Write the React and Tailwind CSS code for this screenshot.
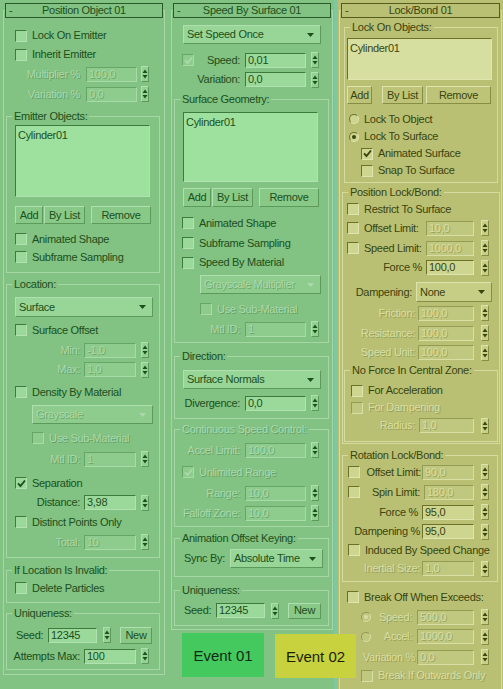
import React from "react";

const G = {
  bg: "bg-[#82c282]",
  text: "text-[#1c4f1c]",
  dis: "text-[#acd8ac] [text-shadow:1px_1px_0_rgba(60,120,60,0.45)]",
  disIcon: "text-[#acd8ac]",
  list: "bg-[#9ee09e]",
  field: "bg-[#9bd99b]",
  fieldDis: "bg-[#8dcc8d]",
  dd: "bg-[#97d697]",
  sunk: "border-t-[#3d7b3d] border-l-[#3d7b3d] border-b-[#b2e2b2] border-r-[#b2e2b2]",
  sunkDis: "border-t-[#67a567] border-l-[#67a567] border-b-[#a9dba9] border-r-[#a9dba9]",
  raised: "border-t-[#b0e0b0] border-l-[#b0e0b0] border-b-[#5c9a5c] border-r-[#5c9a5c]",
  btn: "bg-[#88c988]",
  spinBg: "bg-[#94d294]",
  line: "border-[#a7d7a7]",
  head: "border-[#2a5a2a]",
  dot: "bg-[#1c4f1c]",
  dotDis: "bg-[#acd8ac]",
};

const Y = {
  bg: "bg-[#b9c073]",
  text: "text-[#3a440f]",
  dis: "text-[#d8dea4] [text-shadow:1px_1px_0_rgba(110,118,50,0.45)]",
  disIcon: "text-[#d8dea4]",
  list: "bg-[#d7dfa0]",
  field: "bg-[#cdd58e]",
  fieldDis: "bg-[#c0c77f]",
  dd: "bg-[#c6cd84]",
  sunk: "border-t-[#6b7228] border-l-[#6b7228] border-b-[#e0e5b0] border-r-[#e0e5b0]",
  sunkDis: "border-t-[#949b52] border-l-[#949b52] border-b-[#d8dea4] border-r-[#d8dea4]",
  raised: "border-t-[#dde3ac] border-l-[#dde3ac] border-b-[#868d44] border-r-[#868d44]",
  btn: "bg-[#bdc477]",
  spinBg: "bg-[#c8cf86]",
  line: "border-[#d5db9e]",
  head: "border-[#555c1e]",
  dot: "bg-[#3a440f]",
  dotDis: "bg-[#d8dea4]",
};

const R = ({ cls = "", children }) => (
  <div className={`flex items-center shrink-0 ${cls}`}>{children}</div>
);

function Box({ t, checked, dis, cls = "" }) {
  return (
    <span
      className={`w-[12px] h-[12px] shrink-0 border ${dis ? t.sunkDis : t.sunk} ${
        dis ? t.fieldDis : t.field
      } flex items-center justify-center ${cls}`}
    >
      {checked && (
        <svg width="9" height="9" viewBox="0 0 9 9" className={dis ? t.disIcon : t.text}>
          <path d="M1 4.3 L3.5 7 L8 1.5" fill="none" stroke="currentColor" strokeWidth="1.9" />
        </svg>
      )}
    </span>
  );
}

function Radio({ t, checked, dis, cls = "" }) {
  return (
    <span
      className={`w-[10px] h-[10px] shrink-0 rounded-full border ${dis ? t.sunkDis : t.sunk} ${
        dis ? t.fieldDis : t.field
      } flex items-center justify-center ${cls}`}
    >
      {checked && <span className={`w-[4px] h-[4px] rounded-full ${dis ? t.dotDis : t.dot}`} />}
    </span>
  );
}

function Spin({ t, cls = "" }) {
  return (
    <span
      className={`w-[8px] h-[16px] shrink-0 border ${t.raised} ${t.spinBg} flex items-center justify-center ${cls}`}
    >
      <svg width="6" height="12" viewBox="0 0 6 12" className={t.text}>
        <path d="M0.5 5 L3 1.5 L5.5 5 Z M0.5 7 L3 10.5 L5.5 7 Z" fill="currentColor" />
      </svg>
    </span>
  );
}

function Field({ t, dis, v, cls = "" }) {
  return (
    <span
      className={`h-[15px] shrink-0 border ${dis ? t.sunkDis : t.sunk} ${
        dis ? t.fieldDis : t.field
      } pl-[2px] leading-[13px] overflow-hidden whitespace-nowrap ${dis ? t.dis : t.text} ${cls}`}
    >
      {v}
    </span>
  );
}

function DD({ t, dis, v, cls = "" }) {
  return (
    <div
      className={`flex items-center justify-between border ${t.raised} ${
        dis ? t.fieldDis : t.dd
      } pl-[3px] pr-[6px] shrink-0 ${cls}`}
    >
      <span className={`whitespace-nowrap ${dis ? t.dis : t.text}`}>{v}</span>
      <svg width="7" height="4" viewBox="0 0 7 4" className={dis ? t.disIcon : t.text}>
        <path d="M0 0 H7 L3.5 4 Z" fill="currentColor" />
      </svg>
    </div>
  );
}

function Btn({ t, children, cls = "" }) {
  return (
    <div
      className={`flex items-center justify-center border ${t.raised} ${t.btn} ${t.text} shrink-0 whitespace-nowrap ${cls}`}
    >
      {children}
    </div>
  );
}

function Lbl({ t, dis, cls = "", children }) {
  return <span className={`shrink-0 whitespace-nowrap ${dis ? t.dis : t.text} ${cls}`}>{children}</span>;
}

function CbRow({ t, cls, bcls, label, checked, dis }) {
  return (
    <R cls={cls}>
      <Box t={t} checked={checked} dis={dis} cls={bcls} />
      <Lbl t={t} dis={dis} cls="ml-[5px]">
        {label}
      </Lbl>
    </R>
  );
}

function RadioRow({ t, cls, bcls, label, checked, dis }) {
  return (
    <R cls={cls}>
      <Radio t={t} checked={checked} dis={dis} cls={bcls} />
      <Lbl t={t} dis={dis} cls="ml-[5px]">
        {label}
      </Lbl>
    </R>
  );
}

function NumRow({ t, cls, lcls, label, v, dis, ldis, fcls, scls }) {
  return (
    <R cls={cls}>
      <Lbl t={t} dis={ldis} cls={lcls}>
        {label}
      </Lbl>
      <Field t={t} dis={dis} v={v} cls={fcls} />
      <Spin t={t} cls={scls} />
    </R>
  );
}

function Grp({ t, title, dis, cls = "", children }) {
  return (
    <fieldset className={`border ${t.line} min-w-0 ${cls}`}>
      <legend className={`ml-[5px] px-[2px] leading-[13px] whitespace-nowrap ${dis ? t.dis : t.text}`}>
        {title}
      </legend>
      {children}
    </fieldset>
  );
}

function Col({ t, title, cls = "", children }) {
  return (
    <div className={`shrink-0 pt-[3px] ${cls}`}>
      <div className={`relative z-10 mx-[3px] h-[15px] border ${t.head} ${t.bg} ${t.text} flex items-center`}>
        <span className="w-[10px] pl-[3px]">-</span>
        <span className="flex-1 text-center whitespace-nowrap">{title}</span>
        <span className="w-[10px]" />
      </div>
      <div className={`-mt-[8px] mx-[1px] border ${t.line}`}>{children}</div>
    </div>
  );
}

function Column1() {
  const t = G;
  const g = "ml-[2px] mr-[4px]";
  const nl = "w-[77px] text-right pr-[4px]";
  return (
    <Col t={t} title="Position Object 01" cls="ml-[2px] w-[164px]">
      <CbRow t={t} cls="mt-[15px] h-[19px]" bcls="ml-[11px]" label="Lock On Emitter" />
      <CbRow t={t} cls="h-[19px]" bcls="ml-[11px]" label="Inherit Emitter" />
      <NumRow t={t} cls="h-[20px]" lcls="w-[82px] text-right pr-[6px]" label="Multiplier %" v="100,0" dis ldis fcls="w-[51px]" scls="ml-[4px]" />
      <NumRow t={t} cls="h-[20px]" lcls="w-[82px] text-right pr-[6px]" label="Variation %" v="0,0" dis ldis fcls="w-[51px]" scls="ml-[4px]" />

      <Grp t={t} title="Emitter Objects:" cls={`mt-[6px] ${g} pb-[6px]`}>
        <div className={`mt-[2px] ml-[8px] w-[135px] h-[72px] border ${t.sunk} ${t.list} pl-[2px] pt-[3px] ${t.text}`}>
          Cylinder01
        </div>
        <R cls="mt-[9px] h-[18px]">
          <Btn t={t} cls="ml-[8px] w-[28px] h-[18px]">Add</Btn>
          <Btn t={t} cls="ml-[1px] w-[41px] h-[18px]">By List</Btn>
          <Btn t={t} cls="ml-[6px] w-[60px] h-[18px]">Remove</Btn>
        </R>
        <CbRow t={t} cls="mt-[6px] h-[18px]" bcls="ml-[8px]" label="Animated Shape" />
        <CbRow t={t} cls="h-[18px]" bcls="ml-[8px]" label="Subframe Sampling" />
      </Grp>

      <Grp t={t} title="Location:" cls={`mt-[5px] ${g} pb-[5px]`}>
        <DD t={t} cls="mt-[6px] ml-[8px] w-[138px] h-[20px]" v="Surface" />
        <CbRow t={t} cls="mt-[3px] h-[20px]" bcls="ml-[8px]" label="Surface Offset" />
        <NumRow t={t} cls="h-[20px]" lcls={nl} label="Min:" v="-1,0" dis ldis fcls="w-[52px]" scls="ml-[5px]" />
        <NumRow t={t} cls="h-[19px]" lcls={nl} label="Max:" v="1,0" dis ldis fcls="w-[52px]" scls="ml-[5px]" />
        <CbRow t={t} cls="mt-[3px] h-[20px]" bcls="ml-[8px]" label="Density By Material" />
        <DD t={t} dis cls="mt-[3px] ml-[25px] w-[121px] h-[19px]" v="Grayscale" />
        <CbRow t={t} cls="mt-[5px] h-[18px]" bcls="ml-[25px]" label="Use Sub-Material" dis />
        <NumRow t={t} cls="mt-[2px] h-[20px]" lcls={nl} label="Mtl ID:" v="1" dis ldis fcls="w-[52px]" scls="ml-[5px]" />
        <CbRow t={t} cls="mt-[4px] h-[20px]" bcls="ml-[8px]" label="Separation" checked />
        <NumRow t={t} cls="h-[19px]" lcls={nl} label="Distance:" v="3,98" fcls="w-[52px]" scls="ml-[5px]" />
        <CbRow t={t} cls="h-[20px]" bcls="ml-[8px]" label="Distinct Points Only" />
        <NumRow t={t} cls="h-[20px]" lcls={nl} label="Total:" v="10" dis ldis fcls="w-[52px]" scls="ml-[5px]" />
      </Grp>

      <Grp t={t} title="If Location Is Invalid:" cls={`mt-[6px] ${g} pb-[5px]`}>
        <CbRow t={t} cls="mt-[2px] h-[18px]" bcls="ml-[8px]" label="Delete Particles" />
      </Grp>

      <Grp t={t} title="Uniqueness:" cls={`mt-[4px] ${g} pb-[3px] mb-[4px]`}>
        <R cls="mt-[5px] h-[20px]">
          <Lbl t={t} cls="w-[41px] pl-[9px]">Seed:</Lbl>
          <Field t={t} v="12345" cls="w-[49px]" />
          <Spin t={t} cls="ml-[6px]" />
          <Btn t={t} cls="ml-[9px] w-[32px] h-[17px]">New</Btn>
        </R>
        <NumRow t={t} cls="mt-[1px] h-[20px]" lcls={nl} label="Attempts Max:" v="100" fcls="w-[52px]" scls="ml-[5px]" />
      </Grp>
    </Col>
  );
}

function Column2() {
  const t = G;
  const g = "ml-[2px] mr-[3px]";
  const nl = "w-[70px] text-right pr-[5px]";
  return (
    <Col t={t} title="Speed By Surface 01" cls="ml-[4px] w-[164px]">
      <DD t={t} cls="mt-[14px] ml-[11px] w-[138px] h-[19px]" v="Set Speed Once" />
      <R cls="mt-[6px] h-[20px]">
        <Box t={t} checked dis cls="ml-[10px]" />
        <Lbl t={t} cls="w-[51px] text-right pr-[5px]">Speed:</Lbl>
        <Field t={t} v="0,01" cls="w-[61px]" />
        <Spin t={t} cls="ml-[5px]" />
      </R>
      <NumRow t={t} cls="h-[19px]" lcls="w-[73px] text-right pr-[5px]" label="Variation:" v="0,0" fcls="w-[61px]" scls="ml-[5px]" />

      <Grp t={t} title="Surface Geometry:" cls={`mt-[4px] ${g} pb-[3px]`}>
        <div className={`mt-[6px] ml-[8px] w-[135px] h-[70px] border ${t.sunk} ${t.list} pl-[2px] pt-[3px] ${t.text}`}>
          Cylinder01
        </div>
        <R cls="mt-[6px] h-[19px]">
          <Btn t={t} cls="ml-[8px] w-[28px] h-[19px]">Add</Btn>
          <Btn t={t} cls="ml-[1px] w-[41px] h-[19px]">By List</Btn>
          <Btn t={t} cls="ml-[6px] w-[60px] h-[19px]">Remove</Btn>
        </R>
        <CbRow t={t} cls="mt-[7px] h-[18px]" bcls="ml-[7px]" label="Animated Shape" />
        <CbRow t={t} cls="mt-[1px] h-[20px]" bcls="ml-[7px]" label="Subframe Sampling" />
        <CbRow t={t} cls="h-[19px]" bcls="ml-[7px]" label="Speed By Material" />
        <DD t={t} dis cls="mt-[3px] ml-[25px] w-[121px] h-[19px]" v="Grayscale Multiplier" />
        <CbRow t={t} cls="mt-[6px] h-[18px]" bcls="ml-[25px]" label="Use Sub-Material" dis />
        <NumRow t={t} cls="mt-[1px] h-[20px]" lcls={nl} label="Mtl ID:" v="1" dis ldis fcls="w-[61px]" scls="ml-[5px]" />
      </Grp>

      <Grp t={t} title="Direction:" cls={`mt-[7px] ${g} pb-[5px]`}>
        <DD t={t} cls="mt-[7px] ml-[8px] w-[138px] h-[19px]" v="Surface Normals" />
        <NumRow t={t} cls="mt-[4px] h-[20px]" lcls={nl} label="Divergence:" v="0,0" fcls="w-[61px]" scls="ml-[5px]" />
      </Grp>

      <Grp t={t} title="Continuous Speed Control:" dis cls={`mt-[4px] ${g} pb-[3px]`}>
        <NumRow t={t} cls="mt-[4px] h-[20px]" lcls={nl} label="Accel Limit:" v="100,0" dis ldis fcls="w-[61px]" scls="ml-[5px]" />
        <CbRow t={t} cls="mt-[2px] h-[20px]" bcls="ml-[7px]" label="Unlimited Range" checked dis />
        <NumRow t={t} cls="mt-[1px] h-[20px]" lcls={nl} label="Range:" v="10,0" dis ldis fcls="w-[61px]" scls="ml-[5px]" />
        <NumRow t={t} cls="h-[20px]" lcls={nl} label="Falloff Zone:" v="10,0" dis ldis fcls="w-[61px]" scls="ml-[5px]" />
      </Grp>

      <Grp t={t} title="Animation Offset Keying:" cls={`mt-[5px] ${g} pb-[8px]`}>
        <R cls="mt-[4px] h-[19px]">
          <Lbl t={t} cls="w-[55px] pl-[9px]">Sync By:</Lbl>
          <DD t={t} cls="w-[93px] h-[19px]" v="Absolute Time" />
        </R>
      </Grp>

      <Grp t={t} title="Uniqueness:" cls={`mt-[7px] ${g} pb-[5px] mb-[3px]`}>
        <R cls="mt-[4px] h-[19px]">
          <Lbl t={t} cls="w-[41px] pl-[9px]">Seed:</Lbl>
          <Field t={t} v="12345" cls="w-[49px]" />
          <Spin t={t} cls="ml-[6px]" />
          <Btn t={t} cls="ml-[9px] w-[33px] h-[16px]">New</Btn>
        </R>
      </Grp>
    </Col>
  );
}

function Column3() {
  const t = Y;
  return (
    <Col t={t} title="Lock/Bond 01" cls={`w-[165px] h-[689px] ${t.bg}`}>
      <Grp t={t} title="Lock On Objects:" cls="mt-[10px] ml-[4px] mr-[3px] pb-[3px]">
        <div className={`mt-[4px] ml-[2px] w-[145px] h-[42px] border ${t.sunk} ${t.list} pl-[2px] pt-[3px] ${t.text}`}>
          Cylinder01
        </div>
        <R cls="mt-[6px] h-[18px]">
          <Btn t={t} cls="ml-[2px] w-[25px] h-[18px]">Add</Btn>
          <Btn t={t} cls="ml-[10px] w-[41px] h-[18px]">By List</Btn>
          <Btn t={t} cls="ml-[3px] w-[65px] h-[18px]">Remove</Btn>
        </R>
        <RadioRow t={t} cls="mt-[6px] h-[18px]" bcls="ml-[4px]" label="Lock To Object" />
        <RadioRow t={t} cls="h-[17px]" bcls="ml-[4px]" label="Lock To Surface" checked />
        <CbRow t={t} cls="h-[17px]" bcls="ml-[16px]" label="Animated Surface" checked />
        <CbRow t={t} cls="h-[17px]" bcls="ml-[16px]" label="Snap To Surface" />
      </Grp>

      <Grp t={t} title="Position Lock/Bond:" cls="mt-[3px] ml-[2px] mr-[1px]">
        <CbRow t={t} cls="mt-[1px] h-[18px]" bcls="ml-[4px]" label="Restrict To Surface" />
        <R cls="h-[20px]">
          <Box t={t} cls="ml-[4px]" />
          <Lbl t={t} cls="w-[67px] pl-[5px]">Offset Limit:</Lbl>
          <Field t={t} dis v="10,0" cls="w-[48px]" />
          <Spin t={t} cls="ml-[7px]" />
        </R>
        <R cls="h-[20px]">
          <Box t={t} cls="ml-[4px]" />
          <Lbl t={t} cls="w-[67px] pl-[5px]">Speed Limit:</Lbl>
          <Field t={t} dis v="1000,0" cls="w-[48px]" />
          <Spin t={t} cls="ml-[7px]" />
        </R>
        <NumRow t={t} cls="h-[19px]" lcls="w-[83px] text-right pr-[4px]" label="Force %" v="100,0" fcls="w-[48px]" scls="ml-[7px]" />
        <R cls="mt-[5px] h-[20px]">
          <Lbl t={t} cls="w-[73px] text-right pr-[4px]">Dampening:</Lbl>
          <DD t={t} cls="w-[76px] h-[20px]" v="None" />
        </R>
        <NumRow t={t} cls="mt-[1px] h-[20px]" lcls="w-[75px] text-right pr-[3px]" label="Friction:" v="100,0" dis ldis fcls="w-[56px]" scls="ml-[7px]" />
        <NumRow t={t} cls="h-[20px]" lcls="w-[75px] text-right pr-[3px]" label="Resistance:" v="100,0" dis ldis fcls="w-[56px]" scls="ml-[7px]" />
        <NumRow t={t} cls="h-[19px]" lcls="w-[75px] text-right pr-[3px]" label="Speed Unit:" v="100,0" dis ldis fcls="w-[56px]" scls="ml-[7px]" />
        <Grp t={t} title="No Force In Central Zone:" cls="mt-[2px] ml-[1px] mr-[1px] pb-[6px] mb-[1px]">
          <CbRow t={t} cls="mt-[5px] h-[17px]" bcls="ml-[6px]" label="For Acceleration" />
          <CbRow t={t} cls="h-[17px]" bcls="ml-[6px]" label="For Dampening" dis />
          <NumRow t={t} cls="h-[19px]" lcls="w-[74px] text-right pr-[4px]" label="Radius:" v="1,0" dis ldis fcls="w-[55px]" scls="ml-[7px]" />
        </Grp>
      </Grp>

      <Grp t={t} title="Rotation Lock/Bond:" cls="mt-[5px] ml-[2px] mr-[3px] pb-[3px]">
        <R cls="h-[20px]">
          <Box t={t} cls="ml-[5px]" />
          <Lbl t={t} cls="w-[62px] text-right pr-[1px]">Offset Limit:</Lbl>
          <Field t={t} dis v="90,0" cls="w-[52px]" />
          <Spin t={t} cls="ml-[7px]" />
        </R>
        <R cls="h-[20px]">
          <Box t={t} cls="ml-[5px]" />
          <Lbl t={t} cls="w-[64px] text-right pr-[4px]">Spin Limit:</Lbl>
          <Field t={t} dis v="180,0" cls="w-[50px]" />
          <Spin t={t} cls="ml-[7px]" />
        </R>
        <NumRow t={t} cls="h-[20px]" lcls="w-[79px] text-right pr-[4px]" label="Force %" v="95,0" fcls="w-[52px]" scls="ml-[7px]" />
        <NumRow t={t} cls="h-[19px]" lcls="w-[79px] text-right pr-[2px]" label="Dampening %" v="95,0" fcls="w-[52px]" scls="ml-[7px]" />
        <CbRow t={t} cls="h-[18px]" bcls="ml-[5px]" label="Induced By Speed Change" />
        <NumRow t={t} cls="h-[19px]" lcls="w-[79px] text-right pr-[2px]" label="Inertial Size:" v="1,0" dis ldis fcls="w-[52px]" scls="ml-[7px]" />
      </Grp>

      <CbRow t={t} cls="mt-[6px] h-[18px]" bcls="ml-[7px]" label="Break Off When Exceeds:" />
      <R cls="mt-[1px] h-[20px]">
        <Radio t={t} checked dis cls="ml-[21px]" />
        <Lbl t={t} dis cls="w-[46px] text-right pr-[5px]">Speed:</Lbl>
        <Field t={t} dis v="500,0" cls="w-[57px]" />
        <Spin t={t} cls="ml-[7px]" />
      </R>
      <R cls="h-[19px]">
        <Radio t={t} dis cls="ml-[21px]" />
        <Lbl t={t} dis cls="w-[46px] text-right pr-[5px]">Accel:</Lbl>
        <Field t={t} dis v="1000,0" cls="w-[57px]" />
        <Spin t={t} cls="ml-[7px]" />
      </R>
      <NumRow t={t} cls="mt-[1px] h-[20px]" lcls="w-[77px] text-right pr-[2px]" label="Variation %" v="0,0" dis ldis fcls="w-[57px]" scls="ml-[7px]" />
      <CbRow t={t} cls="h-[17px] pb-[40px] box-content" bcls="ml-[21px]" label="Break If Outwards Only" dis />
    </Col>
  );
}

export default function App() {
  return (
    <div className="relative w-[503px] h-[689px] overflow-hidden bg-[#82c282] flex items-start font-['Liberation_Sans',Arial,sans-serif] text-[11px] leading-[13px] tracking-[-0.3px]">
      <Column1 />
      <Column2 />
      <div className="w-[4px] h-[689px] shrink-0 bg-[#7ec8a0]" />
      <Column3 />
      <div className="absolute left-[182px] top-[633px] w-[82px] h-[44px] bg-[#44c95f] flex items-center justify-center text-[15px] tracking-normal text-[#0f2a12]">
        Event 01
      </div>
      <div className="absolute left-[275px] top-[634px] w-[81px] h-[44px] bg-[#c8d13e] flex items-center justify-center text-[15px] tracking-normal text-[#1a1f05]">
        Event 02
      </div>
    </div>
  );
}
